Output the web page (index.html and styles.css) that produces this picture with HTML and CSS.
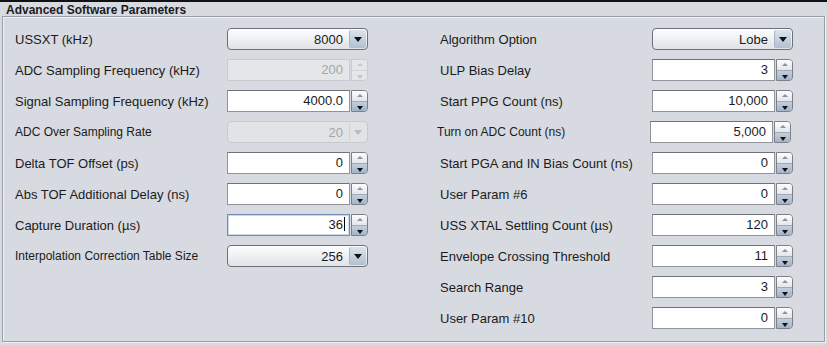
FILE: index.html
```html
<!DOCTYPE html>
<html lang="en">
<head>
  <meta charset="UTF-8" />
  <title>Advanced Software Parameters</title>
  <link rel="stylesheet" href="styles.css">
</head>
<body>
  <div class="panel-title">Advanced Software Parameters</div>
  <div class="group-box">
    <div class="col">
      <div class="row">
        <label>USSXT (kHz)</label>
        <div class="combo"><span class="value">8000</span><span class="combo-arrow"></span></div>
      </div>
      <div class="row">
        <label>ADC Sampling Frequency (kHz)</label>
        <div class="spinner disabled"><span class="field">200</span><span class="spin"><i class="up"></i><i class="down"></i></span></div>
      </div>
      <div class="row">
        <label>Signal Sampling Frequency (kHz)</label>
        <div class="spinner"><span class="field">4000.0</span><span class="spin"><i class="up"></i><i class="down"></i></span></div>
      </div>
      <div class="row">
        <label class="small">ADC Over Sampling Rate</label>
        <div class="combo disabled"><span class="value">20</span><span class="combo-arrow"></span></div>
      </div>
      <div class="row">
        <label>Delta TOF Offset (ps)</label>
        <div class="spinner"><span class="field">0</span><span class="spin"><i class="up"></i><i class="down"></i></span></div>
      </div>
      <div class="row">
        <label>Abs TOF Additional Delay (ns)</label>
        <div class="spinner"><span class="field">0</span><span class="spin"><i class="up"></i><i class="down"></i></span></div>
      </div>
      <div class="row">
        <label>Capture Duration (µs)</label>
        <div class="spinner focused"><span class="field">36<span class="caret"></span></span><span class="spin"><i class="up"></i><i class="down"></i></span></div>
      </div>
      <div class="row">
        <label class="small">Interpolation Correction Table Size</label>
        <div class="combo"><span class="value">256</span><span class="combo-arrow"></span></div>
      </div>
    </div>

    <div class="col">
      <div class="row">
        <label>Algorithm Option</label>
        <div class="combo"><span class="value">Lobe</span><span class="combo-arrow"></span></div>
      </div>
      <div class="row">
        <label>ULP Bias Delay</label>
        <div class="spinner"><span class="field">3</span><span class="spin"><i class="up"></i><i class="down"></i></span></div>
      </div>
      <div class="row">
        <label>Start PPG Count (ns)</label>
        <div class="spinner"><span class="field">10,000</span><span class="spin"><i class="up"></i><i class="down"></i></span></div>
      </div>
      <div class="row shifted">
        <label class="small">Turn on ADC Count (ns)</label>
        <div class="spinner"><span class="field">5,000</span><span class="spin"><i class="up"></i><i class="down"></i></span></div>
      </div>
      <div class="row">
        <label>Start PGA and IN Bias Count (ns)</label>
        <div class="spinner"><span class="field">0</span><span class="spin"><i class="up"></i><i class="down"></i></span></div>
      </div>
      <div class="row">
        <label>User Param #6</label>
        <div class="spinner"><span class="field">0</span><span class="spin"><i class="up"></i><i class="down"></i></span></div>
      </div>
      <div class="row">
        <label>USS XTAL Settling Count (µs)</label>
        <div class="spinner"><span class="field">120</span><span class="spin"><i class="up"></i><i class="down"></i></span></div>
      </div>
      <div class="row">
        <label>Envelope Crossing Threshold</label>
        <div class="spinner"><span class="field">11</span><span class="spin"><i class="up"></i><i class="down"></i></span></div>
      </div>
      <div class="row">
        <label>Search Range</label>
        <div class="spinner"><span class="field">3</span><span class="spin"><i class="up"></i><i class="down"></i></span></div>
      </div>
      <div class="row">
        <label>User Param #10</label>
        <div class="spinner"><span class="field">0</span><span class="spin"><i class="up"></i><i class="down"></i></span></div>
      </div>
    </div>
  </div>
</body>
</html>
```

FILE: styles.css
```css
html, body {
  height: 100%;
}
body {
  margin: 0;
  background: #d7dae1;
  border-top: 2px solid #111;
  box-sizing: border-box;
  font-family: "Liberation Sans", Arial, sans-serif;
  font-size: 13px;
  color: #1b1b1b;
}
.panel-title {
  font-weight: bold;
  font-size: 12px;
  padding: 1px 0 0 6px;
  height: 13px;
  line-height: 14px;
}
.group-box {
  margin: 0 2px 0 2px;
  height: 326px;
  box-sizing: border-box;
  border: 1px solid #9aa0a8;
  box-shadow: inset 1px 1px 0 #eef0f3, 1px 1px 0 #eef0f3;
  padding: 11px 0 0 12px;
  display: flex;
  gap: 72px;
}
.col {
  display: flex;
  flex-direction: column;
  gap: 9px;
}
.row {
  display: flex;
  align-items: center;
  height: 22px;
}
.row label {
  width: 212px;
  white-space: nowrap;
}
.row label.small {
  font-size: 12px;
}
.row.shifted {
  margin-left: -3px;
}
.row.shifted label {
  width: 213px;
}

/* combo box */
.combo {
  width: 141px;
  height: 22px;
  box-sizing: border-box;
  border: 1px solid #6d727a;
  border-radius: 4px;
  background: linear-gradient(#fdfdfe, #f1f2f4 45%, #dfe2e7);
  display: flex;
  align-items: center;
  justify-content: flex-end;
  padding: 1px;
}
.combo .value {
  padding-right: 6px;
}
.combo-arrow {
  width: 16px;
  height: 18px;
  border-radius: 2px;
  background: linear-gradient(#dce3ec, #b1c0d1);
  border-left: 1px solid #aab3be;
  position: relative;
}
.combo-arrow::after {
  content: "";
  position: absolute;
  left: 4px;
  top: 7px;
  border-left: 4px solid transparent;
  border-right: 4px solid transparent;
  border-top: 5px solid #111;
}
.combo.disabled {
  border-color: #c6c9ce;
  background: #e1e3e7;
  color: #a3a5a8;
}
.combo.disabled .combo-arrow {
  background: #e1e3e7;
  border-left-color: #cfd2d6;
}
.combo.disabled .combo-arrow::after {
  border-top-color: #b7babe;
}

/* spinner */
.spinner {
  width: 141px;
  height: 22px;
  display: flex;
}
.spinner .field {
  flex: 1;
  box-sizing: border-box;
  background: #fff;
  border: 1px solid #8f949b;
  border-top-color: #6e737b;
  text-align: right;
  padding-right: 6px;
  line-height: 20px;
}
.spin {
  width: 17px;
  margin-left: 1px;
  display: flex;
  flex-direction: column;
  border: 1px solid #7c8189;
  border-radius: 0 4px 4px 0;
  box-sizing: border-box;
  overflow: hidden;
}
.spin i {
  flex: 1;
  position: relative;
}
.spin .up {
  background: linear-gradient(#fbfcfd, #e3e7ec);
  border-bottom: 1px solid #a3aab3;
}
.spin .down {
  background: linear-gradient(#c3cfdc, #a3b4c7);
}
.spin .up::after {
  content: "";
  position: absolute;
  left: 5px;
  top: 3px;
  border-left: 3px solid transparent;
  border-right: 3px solid transparent;
  border-bottom: 3px solid #8e9399;
}
.spin .down::after {
  content: "";
  position: absolute;
  left: 5px;
  top: 4px;
  border-left: 3px solid transparent;
  border-right: 3px solid transparent;
  border-top: 4px solid #111;
}
.spinner.disabled .field {
  background: #e4e6ea;
  border-color: #c8cbd0;
  color: #a4a6a9;
}
.spinner.disabled .spin {
  border-color: #c8cbd0;
}
.spinner.disabled .up,
.spinner.disabled .down {
  background: #e4e6ea;
  border-bottom-color: #d0d3d7;
}
.spinner.disabled .up::after {
  border-bottom-color: #c3c6ca;
}
.spinner.disabled .down::after {
  border-top-color: #c3c6ca;
}
.spinner.focused .field {
  border: 1px solid #6f8fb8;
  box-shadow: inset 0 0 0 1px #c9d7e8;
  padding-right: 4px;
}
.caret {
  display: inline-block;
  width: 1px;
  height: 14px;
  background: #000;
  margin-left: 1px;
  vertical-align: -2px;
}
```
